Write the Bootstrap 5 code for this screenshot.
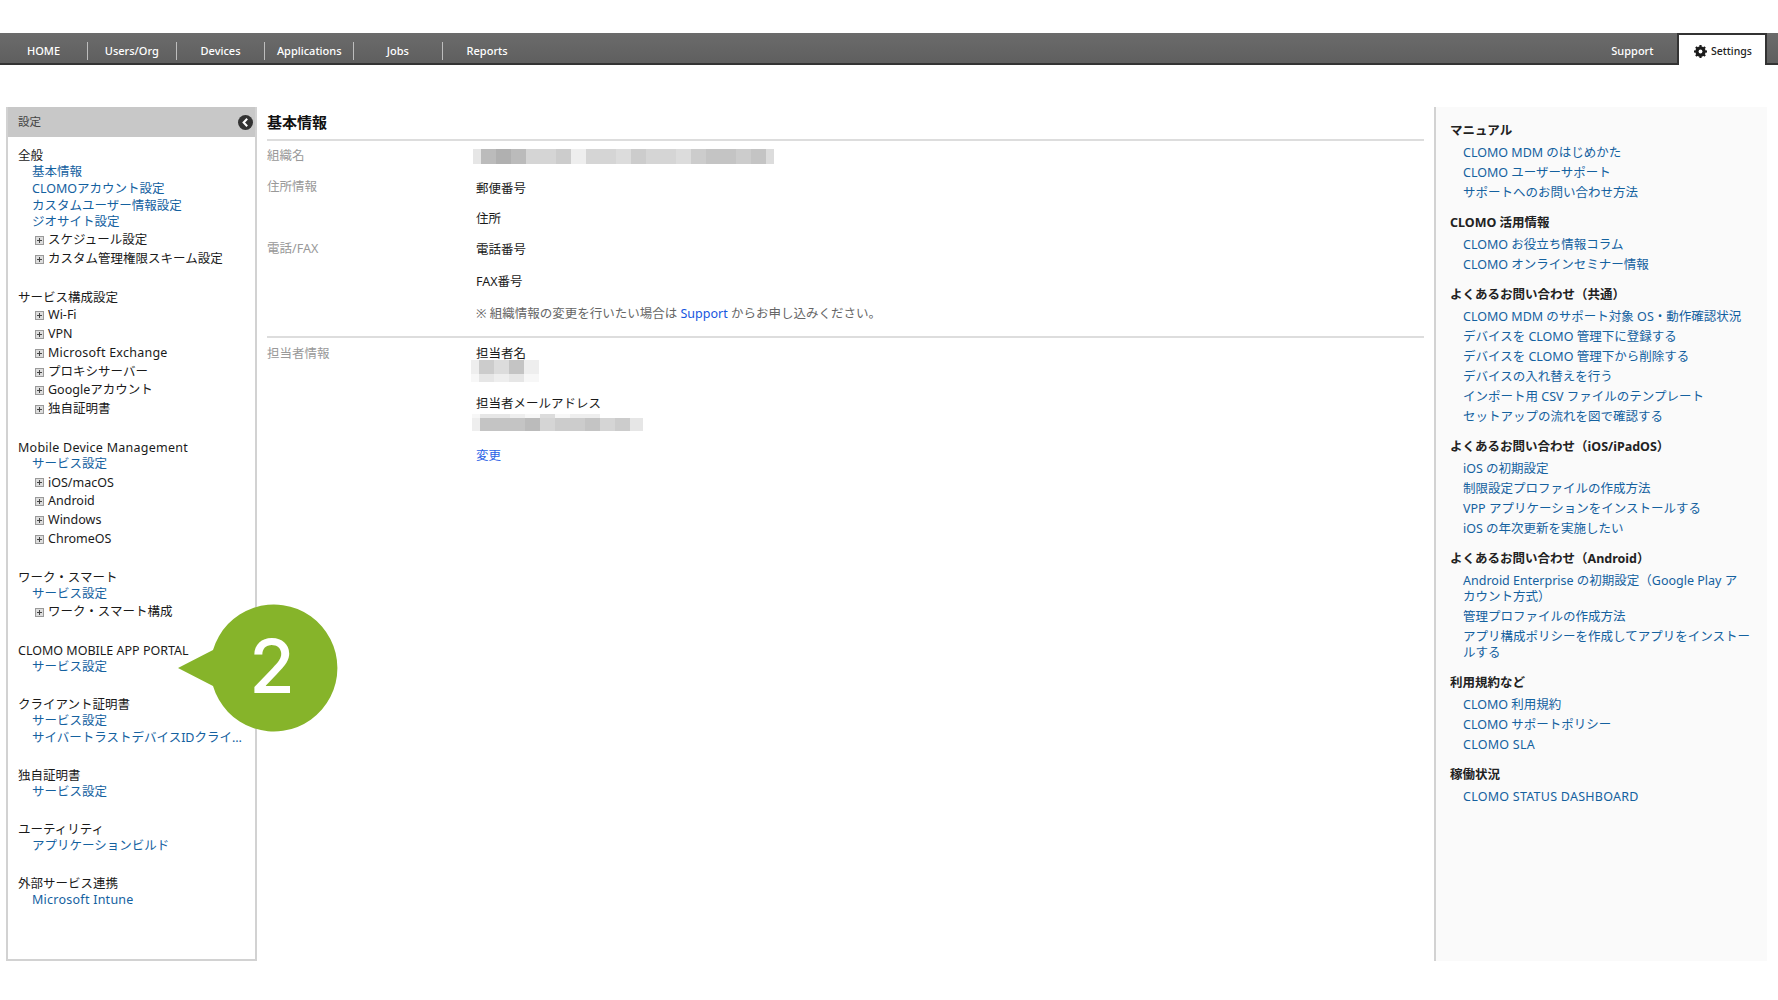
<!DOCTYPE html>
<html lang="ja">
<head>
<meta charset="utf-8">
<title>基本情報</title>
<link href="https://cdn.jsdelivr.net/npm/bootstrap@5.3.0/dist/css/bootstrap.min.css" rel="stylesheet">
<style>
html,body{height:1000px;overflow:hidden;background:#fff}
body{font-family:"Noto Sans","Noto Sans CJK JP",sans-serif;font-size:12.5px;color:#1a1a1a;padding-top:33px;position:relative}
a{text-decoration:none;color:#14619f}
.latintext{letter-spacing:.25px}
.topbar{height:32px;background:linear-gradient(#6b6b6b,#5f5f5f);border-bottom:2px solid #333;padding-left:0}
.tabitem{width:88.700px;height:18px;margin-top:9px;border-right:1px solid #bdbdbd;text-align:center;color:#fff;font-size:11px;line-height:18px;font-weight:500}
.tabitem:first-child{width:88px}
.tabitem.noline{border-right:0}
.supportlink{color:#fff;font-size:11px;font-weight:500;line-height:18px;margin-top:9px;margin-right:23.500px}
.settingstab{width:90px;height:32px;margin-right:11px;background:#fff;border:2px solid #333;border-bottom:0;color:#222;font-size:10.500px;font-weight:500;gap:4px;padding:3px 0 0 15px}
.shell{margin-top:42px;height:854px;padding:0 11px 0 6px;gap:10px}
.sidepane{width:251px;border:2px solid #d2d2d2;border-top:0;flex:none}
.sidehead{height:30px;background:#c8c8c8;padding:0 2px 0 10px;color:#444;font-size:11.500px}
.backdot{width:15px;height:15px}
.sidebody{padding:10px 0 0 10px}
.sidegroup{margin-bottom:20px}
.grouptitle{line-height:17.400px;color:#1a1a1a}
.sidelink{display:block;line-height:16.600px;padding-left:14px;white-space:nowrap}
.sidelink + .treeitem{margin-top:.5px}
.treeitem{line-height:18.800px;padding-left:17px;gap:4px;color:#1a1a1a;white-space:nowrap}
.plusbox{width:9px;height:9px;flex:none}
.mainpane{flex:1 1 auto;min-width:0}
.pagetitle{font-size:15px;font-weight:700;color:#111;height:33.500px;line-height:30px;border-bottom:2px solid #ddd}
.inforow{display:flex}
.infolabel{width:209px;color:#999;flex:none;line-height:18px}
.orglabel{margin-top:-2px;height:20px}
.infovalue{line-height:18px;color:#1a1a1a}
.rowsplit{border-bottom:2px solid #ddd}
.notetext{color:#666;line-height:18px;margin-top:14.200px;margin-bottom:12.800px}
.notetext a{color:#1656e0}
.changelink{color:#2a62e6;margin-top:16px}
.pixrow{display:flex}
.pixrow span{display:block;width:15px;height:100%;flex:none}
.pixblock{filter:blur(.4px)}
.v1{background:#b0b0b0}.v2{background:#bbb}.v3{background:#c4c4c4}.v4{background:#ccc}.v5{background:#d5d5d5}.v6{background:#dcdcdc}.v7{background:#e6e6e6}.v8{background:#eee}.v9{background:#f7f7f7}
.pixrow span.edge{width:8px}
.pixrow span.edgewide{width:13px}
.pixorg{margin:0 0 0 -3px;height:15px}
.pixname{margin:-3px 0 0 -5px}
.pixname .rowa{height:14px}.pixname .rowb{height:8px}
.pixmail{margin:1px 0 0 -4px}
.pixmail .rowa{height:4px}.pixmail .rowb{height:13px}
.helppane{width:333px;flex:none;background:#fafafa;border-left:2px solid #d2d2d2;padding:14px 8px 0 14px}
.helphead{font-weight:700;color:#222;line-height:20px;margin-bottom:2px}
.helplist{padding:0 0 0 13px;margin:0 0 10px;list-style:none}
.helplist li{line-height:16px;padding:2px 0}
.helplist a{color:#14619f}
.callout{position:absolute;left:176px;top:604px;width:164px;height:130px}
.calloutnum{font-family:"Inter",sans-serif;font-size:74px;font-weight:500;fill:#fff}
.addrlabel{margin-top:11px}
.phonelabel{margin-top:44px}
.valueline{margin-top:13.500px}
.valueline.firstvalue{margin-top:13px}
.valueline.secondvalue{margin-top:12.300px}
.contactrow{padding-top:7.500px}
.mailtitle{margin-top:13px}
</style>
</head>
<body>
<nav class="topbar d-flex">
  <div class="tabitem">HOME</div>
  <div class="tabitem">Users/Org</div>
  <div class="tabitem">Devices</div>
  <div class="tabitem">Applications</div>
  <div class="tabitem">Jobs</div>
  <div class="tabitem noline">Reports</div>
  <div class="ms-auto supportlink">Support</div>
  <div class="settingstab d-flex align-items-center">
    <svg width="13" height="13" viewBox="0 0 24 24" aria-hidden="true"><g fill="#1c1c1c"><circle cx="12" cy="12" r="9.500"/><rect x="10" y="0" width="4" height="24"/><rect x="0" y="10" width="24" height="4"/><rect x="10" y="0" width="4" height="24" transform="rotate(45 12 12)"/><rect x="10" y="0" width="4" height="24" transform="rotate(-45 12 12)"/></g><circle cx="12" cy="12" r="3.500" fill="#fff"/></svg>
    <span>Settings</span>
  </div>
</nav>

<div class="shell d-flex">
  <aside class="sidepane">
    <div class="sidehead d-flex align-items-center justify-content-between">
      <span>設定</span>
      <svg class="backdot" viewBox="0 0 16 16" aria-hidden="true"><circle cx="8" cy="8" r="8" fill="#333"/><path d="M9.800 4 6 8l3.800 4" fill="none" stroke="#fff" stroke-width="2.200"/></svg>
    </div>
    <div class="sidebody">
      <div class="sidegroup">
        <div class="grouptitle">全般</div>
        <a class="sidelink" href="#">基本情報</a>
        <a class="sidelink" href="#">CLOMOアカウント設定</a>
        <a class="sidelink" href="#">カスタムユーザー情報設定</a>
        <a class="sidelink" href="#">ジオサイト設定</a>
        <div class="treeitem d-flex align-items-center"><svg class="plusbox" viewBox="0 0 9 9"><rect x=".5" y=".5" width="8" height="8" fill="#ddd" stroke="#999"/><path d="M2 4.500h5M4.500 2v5" stroke="#444"/></svg>スケジュール設定</div>
        <div class="treeitem d-flex align-items-center"><svg class="plusbox" viewBox="0 0 9 9"><rect x=".5" y=".5" width="8" height="8" fill="#ddd" stroke="#999"/><path d="M2 4.500h5M4.500 2v5" stroke="#444"/></svg>カスタム管理権限スキーム設定</div>
      </div>
      <div class="sidegroup">
        <div class="grouptitle">サービス構成設定</div>
        <div class="treeitem d-flex align-items-center"><svg class="plusbox" viewBox="0 0 9 9"><rect x=".5" y=".5" width="8" height="8" fill="#ddd" stroke="#999"/><path d="M2 4.500h5M4.500 2v5" stroke="#444"/></svg>Wi-Fi</div>
        <div class="treeitem d-flex align-items-center"><svg class="plusbox" viewBox="0 0 9 9"><rect x=".5" y=".5" width="8" height="8" fill="#ddd" stroke="#999"/><path d="M2 4.500h5M4.500 2v5" stroke="#444"/></svg>VPN</div>
        <div class="treeitem d-flex align-items-center"><svg class="plusbox" viewBox="0 0 9 9"><rect x=".5" y=".5" width="8" height="8" fill="#ddd" stroke="#999"/><path d="M2 4.500h5M4.500 2v5" stroke="#444"/></svg><span class="latintext">Microsoft Exchange</span></div>
        <div class="treeitem d-flex align-items-center"><svg class="plusbox" viewBox="0 0 9 9"><rect x=".5" y=".5" width="8" height="8" fill="#ddd" stroke="#999"/><path d="M2 4.500h5M4.500 2v5" stroke="#444"/></svg>プロキシサーバー</div>
        <div class="treeitem d-flex align-items-center"><svg class="plusbox" viewBox="0 0 9 9"><rect x=".5" y=".5" width="8" height="8" fill="#ddd" stroke="#999"/><path d="M2 4.500h5M4.500 2v5" stroke="#444"/></svg>Googleアカウント</div>
        <div class="treeitem d-flex align-items-center"><svg class="plusbox" viewBox="0 0 9 9"><rect x=".5" y=".5" width="8" height="8" fill="#ddd" stroke="#999"/><path d="M2 4.500h5M4.500 2v5" stroke="#444"/></svg>独自証明書</div>
      </div>
      <div class="sidegroup">
        <div class="grouptitle latintext">Mobile Device Management</div>
        <a class="sidelink" href="#">サービス設定</a>
        <div class="treeitem d-flex align-items-center"><svg class="plusbox" viewBox="0 0 9 9"><rect x=".5" y=".5" width="8" height="8" fill="#ddd" stroke="#999"/><path d="M2 4.500h5M4.500 2v5" stroke="#444"/></svg>iOS/macOS</div>
        <div class="treeitem d-flex align-items-center"><svg class="plusbox" viewBox="0 0 9 9"><rect x=".5" y=".5" width="8" height="8" fill="#ddd" stroke="#999"/><path d="M2 4.500h5M4.500 2v5" stroke="#444"/></svg>Android</div>
        <div class="treeitem d-flex align-items-center"><svg class="plusbox" viewBox="0 0 9 9"><rect x=".5" y=".5" width="8" height="8" fill="#ddd" stroke="#999"/><path d="M2 4.500h5M4.500 2v5" stroke="#444"/></svg>Windows</div>
        <div class="treeitem d-flex align-items-center"><svg class="plusbox" viewBox="0 0 9 9"><rect x=".5" y=".5" width="8" height="8" fill="#ddd" stroke="#999"/><path d="M2 4.500h5M4.500 2v5" stroke="#444"/></svg>ChromeOS</div>
      </div>
      <div class="sidegroup">
        <div class="grouptitle">ワーク・スマート</div>
        <a class="sidelink" href="#">サービス設定</a>
        <div class="treeitem d-flex align-items-center"><svg class="plusbox" viewBox="0 0 9 9"><rect x=".5" y=".5" width="8" height="8" fill="#ddd" stroke="#999"/><path d="M2 4.500h5M4.500 2v5" stroke="#444"/></svg>ワーク・スマート構成</div>
      </div>
      <div class="sidegroup">
        <div class="grouptitle">CLOMO MOBILE APP PORTAL</div>
        <a class="sidelink" href="#">サービス設定</a>
      </div>
      <div class="sidegroup">
        <div class="grouptitle">クライアント証明書</div>
        <a class="sidelink" href="#">サービス設定</a>
        <a class="sidelink" href="#">サイバートラストデバイスIDクライ…</a>
      </div>
      <div class="sidegroup">
        <div class="grouptitle">独自証明書</div>
        <a class="sidelink" href="#">サービス設定</a>
      </div>
      <div class="sidegroup">
        <div class="grouptitle">ユーティリティ</div>
        <a class="sidelink" href="#">アプリケーションビルド</a>
      </div>
      <div class="sidegroup">
        <div class="grouptitle">外部サービス連携</div>
        <a class="sidelink latintext" href="#">Microsoft Intune</a>
      </div>
    </div>
  </aside>

  <main class="mainpane">
    <div class="pagetitle">基本情報</div>
    <div class="inforow pt-2">
      <div class="infolabel orglabel">組織名</div>
      <div class="pixblock pixorg pixrow">
        <span class="edge v7"></span><span class="v2"></span><span class="v1"></span><span class="v2"></span><span class="v5"></span><span class="v5"></span><span class="v4"></span><span class="v8"></span><span class="v5"></span><span class="v5"></span><span class="v6"></span><span class="v4"></span><span class="v5"></span><span class="v5"></span><span class="v6"></span><span class="v4"></span><span class="v3"></span><span class="v3"></span><span class="v4"></span><span class="v3"></span><span class="edge v6"></span>
      </div>
    </div>
    <div class="inforow rowsplit">
      <div class="infolabel">
        <div class="addrlabel">住所情報</div>
        <div class="phonelabel">電話/FAX</div>
      </div>
      <div class="infovalue">
        <div class="valueline firstvalue">郵便番号</div>
        <div class="valueline secondvalue">住所</div>
        <div class="valueline">電話番号</div>
        <div class="valueline">FAX番号</div>
        <div class="notetext">※ 組織情報の変更を行いたい場合は <a href="#">Support</a> からお申し込みください。</div>
      </div>
    </div>
    <div class="inforow contactrow">
      <div class="infolabel">担当者情報</div>
      <div class="infovalue">
        <div>担当者名</div>
        <div class="pixblock pixname">
          <div class="pixrow rowa"><span class="edge v8"></span><span class="v4"></span><span class="v6"></span><span class="v3"></span><span class="v8"></span></div>
          <div class="pixrow rowb"><span class="edge v9"></span><span class="v7"></span><span class="v8"></span><span class="v7"></span><span class="v9"></span></div>
        </div>
        <div class="mailtitle">担当者メールアドレス</div>
        <div class="pixblock pixmail">
          <div class="pixrow rowa"><span class="edge v9"></span><span class="v7"></span><span class="v7"></span><span class="v8"></span><span class="v9"></span><span class="v6"></span><span class="v9"></span><span class="v8"></span><span class="v8"></span></div>
          <div class="pixrow rowb"><span class="edge v8"></span><span class="v3"></span><span class="v3"></span><span class="v3"></span><span class="v2"></span><span class="v5"></span><span class="v4"></span><span class="v4"></span><span class="v3"></span><span class="v5"></span><span class="v4"></span><span class="edgewide v7"></span></div>
        </div>
        <a class="changelink d-block" href="#">変更</a>
      </div>
    </div>
  </main>

  <aside class="helppane">
    <div class="helphead">マニュアル</div>
    <ul class="helplist">
      <li><a href="#">CLOMO MDM のはじめかた</a></li>
      <li><a href="#">CLOMO ユーザーサポート</a></li>
      <li><a href="#">サポートへのお問い合わせ方法</a></li>
    </ul>
    <div class="helphead">CLOMO 活用情報</div>
    <ul class="helplist">
      <li><a href="#">CLOMO お役立ち情報コラム</a></li>
      <li><a href="#">CLOMO オンラインセミナー情報</a></li>
    </ul>
    <div class="helphead">よくあるお問い合わせ（共通）</div>
    <ul class="helplist">
      <li><a href="#">CLOMO MDM のサポート対象 OS・動作確認状況</a></li>
      <li><a href="#">デバイスを CLOMO 管理下に登録する</a></li>
      <li><a href="#">デバイスを CLOMO 管理下から削除する</a></li>
      <li><a href="#">デバイスの入れ替えを行う</a></li>
      <li><a href="#">インポート用 CSV ファイルのテンプレート</a></li>
      <li><a href="#">セットアップの流れを図で確認する</a></li>
    </ul>
    <div class="helphead">よくあるお問い合わせ（iOS/iPadOS）</div>
    <ul class="helplist">
      <li><a href="#">iOS の初期設定</a></li>
      <li><a href="#">制限設定プロファイルの作成方法</a></li>
      <li><a href="#">VPP アプリケーションをインストールする</a></li>
      <li><a href="#">iOS の年次更新を実施したい</a></li>
    </ul>
    <div class="helphead">よくあるお問い合わせ（Android）</div>
    <ul class="helplist">
      <li><a href="#">Android Enterprise の初期設定（Google Play ア<br>カウント方式）</a></li>
      <li><a href="#">管理プロファイルの作成方法</a></li>
      <li><a href="#">アプリ構成ポリシーを作成してアプリをインストールする</a></li>
    </ul>
    <div class="helphead">利用規約など</div>
    <ul class="helplist">
      <li><a href="#">CLOMO 利用規約</a></li>
      <li><a href="#">CLOMO サポートポリシー</a></li>
      <li><a class="latintext" href="#">CLOMO SLA</a></li>
    </ul>
    <div class="helphead">稼働状況</div>
    <ul class="helplist">
      <li><a class="latintext" href="#">CLOMO STATUS DASHBOARD</a></li>
    </ul>
  </aside>
</div>

<svg class="callout" viewBox="176 604 164 130">
  <path fill="#86b42a" d="M178 668 L213 650 A63.500 63.500 0 1 1 213 686 Z"/>
  <text class="calloutnum" x="272" y="693" text-anchor="middle">2</text>
</svg>
</body>
</html>
